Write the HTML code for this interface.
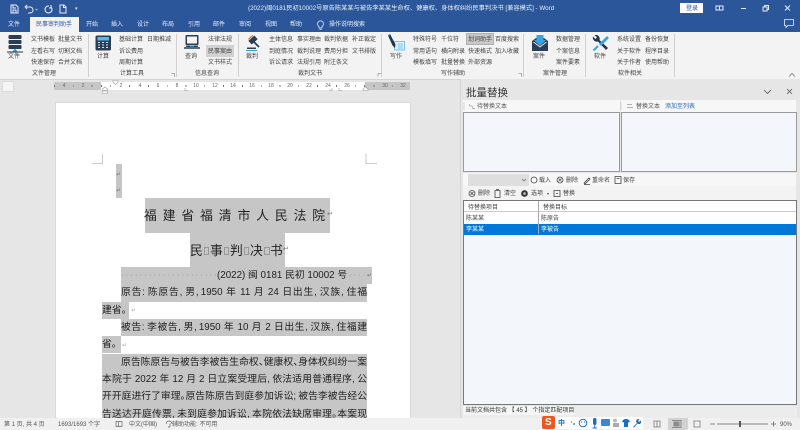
<!DOCTYPE html>
<html lang="zh"><head><meta charset="utf-8"><style>
html,body{margin:0;padding:0;width:800px;height:430px;overflow:hidden;background:#e6e6e6}
body{position:relative;font-family:"Liberation Sans","Noto Sans CJK SC",sans-serif;color:#444;filter:blur(.3px)}
div,span,svg{position:absolute}
.t{white-space:nowrap;font-size:6px;line-height:10px;height:10px;margin-top:.5px}
.c{transform:translateX(-50%)}
.w{color:#e8eef8;font-size:6px}
.g{color:#555}
.sep{width:1px;background:#d0d0d0;top:34px;height:43px}
.sel{background:#c6c6c6}
.ln{left:102px;width:265px;height:17.3px;background:#c6c6c6;overflow:hidden}
.tx{top:2.2px;left:0;width:100%;height:16px;font-size:9.8px;line-height:14px;color:#222;text-align:justify;text-align-last:justify;overflow:hidden}
.tx i{font-style:normal;display:inline-block;width:4.9px;overflow:visible}
.ind{left:121px;width:246px}
.tc{font-size:12.8px;line-height:16px;color:#222;white-space:nowrap}
.d{font-size:7px;color:#777;line-height:10px}
.box{background:#f3f6fb;border:1px solid #9a9a9a;box-sizing:border-box}
.bar{background:#f7f7f7}
.r{font-size:5px;color:#666;line-height:8px;white-space:nowrap;transform:translateX(-50%);top:82px}
</style></head><body>
<!-- title bar -->
<div style="left:0;top:0;width:800px;height:32px;background:#2b579a"></div>
<svg style="left:8px;top:3px" width="75" height="12" viewBox="0 0 75 12" fill="none" stroke="#e8eef8" stroke-width="1"><path d="M3 2h5l2 2v6H3zM5 2v3h3M5 10V7h3v3"/><path d="M17 4h5a3 3 0 0 1 0 6h-2M17 4l2-2M17 4l2 2"/><path d="M27.500 6l1 1 1-1" stroke-width=".6"/><path d="M41 3a3.500 3.500 0 1 0 2 1M43 2v3h-2"/><path d="M52 2h4l2 2v6h-6zM55.500 2v2.500h2.500"/></svg>
<div class="t" style="left:75px;top:3px;color:#e8eef8;font-size:5px">▾</div>
<div class="t w" style="left:248px;top:3px;font-size:6.25px">(2022)闽0181民初10002号原告陈某某与被告李某某生命权、健康权、身体权纠纷民事判决书 [兼容模式] - Word</div>
<div style="left:680px;top:3px;width:23px;height:10px;background:#fff"></div>
<div class="t" style="left:686px;top:3px;color:#2b579a;font-size:6px">登录</div>
<svg style="left:712px;top:3px" width="84" height="11" viewBox="0 0 84 11" fill="none" stroke="#e8eef8" stroke-width="1"><path d="M4 3h7v4H4zM7.500 3v4"/><path d="M29 5.500h5"/><path d="M51 4h4v4h-4zM52.500 4V2.500h4v4H55"/><path d="M73 2.500l5 5M78 2.500l-5 5"/></svg>
<!-- tabs -->
<div style="left:30px;top:17px;width:49px;height:15px;background:#f3f3f3"></div>
<div class="t w c" style="left:14px;top:19px">文件</div>
<div class="t c" style="left:54px;top:19px;color:#2b579a;font-size:6px">民事审判助手</div>
<div class="t w c" style="left:92px;top:19px">开始</div><div class="t w c" style="left:117px;top:19px">插入</div><div class="t w c" style="left:143px;top:19px">设计</div><div class="t w c" style="left:168px;top:19px">布局</div><div class="t w c" style="left:194px;top:19px">引用</div><div class="t w c" style="left:219px;top:19px">邮件</div><div class="t w c" style="left:245px;top:19px">审阅</div><div class="t w c" style="left:271px;top:19px">视图</div><div class="t w c" style="left:296px;top:19px">帮助</div>
<svg style="left:316px;top:19px" width="9" height="11" viewBox="0 0 9 11" fill="none" stroke="#e8eef8" stroke-width=".8"><path d="M3 7.500a3 3 0 1 1 3 0V9H3zM3.500 10.300h2"/></svg>
<div class="t w" style="left:329px;top:19px">操作说明搜索</div>
<svg style="left:783px;top:18px" width="12" height="11" viewBox="0 0 12 11" fill="none" stroke="#e8eef8" stroke-width=".8"><path d="M1.500 1.500h9v6H5L3 9.500v-2H1.500z"/></svg>
<!-- ribbon -->
<div style="left:0;top:32px;width:800px;height:47px;background:#f3f3f3;border-bottom:1px solid #d4d4d4"></div>
<div class="sep" style="left:88px"></div><div class="sep" style="left:176px"></div><div class="sep" style="left:238px"></div><div class="sep" style="left:381px"></div><div class="sep" style="left:523px"></div><div class="sep" style="left:585px"></div><div class="sep" style="left:674px"></div>
<div style="left:206px;top:45px;width:28px;height:12px;background:#d2d2d2"></div>
<div style="left:466px;top:33px;width:28px;height:12px;background:#c9c9c9;border:1px solid #b0b0b0;box-sizing:border-box"></div>
<!-- ribbon icons -->
<svg style="left:6px;top:34px" width="18" height="20" viewBox="0 0 18 20"><rect x="2.500" y="1" width="13" height="4" rx="1" fill="#2a3f55"/><rect x="2.500" y="6" width="13" height="4" rx="1" fill="#2a3f55"/><rect x="2.500" y="11" width="13" height="4" rx="1" fill="#2a3f55"/><path d="M1 18h16" stroke="#333" stroke-width="1"/><path d="M9 14.500l2.500 3h-5z" fill="#2e9fe0"/></svg>
<svg style="left:95px;top:35px" width="17" height="16" viewBox="0 0 17 16"><rect x=".5" y=".5" width="15.500" height="15" rx="1.500" fill="#2a3f55"/><rect x="2.500" y="2" width="11.500" height="3.500" fill="#58b6e8"/><path d="M3 7.500h2M7 7.500h2M11 7.500h2M3 10h2M7 10h2M11 10h2M3 12.500h2M7 12.500h2M11 12.500h2" stroke="#cfe4f2" stroke-width="1"/></svg>
<svg style="left:184px;top:35px" width="16" height="16" viewBox="0 0 16 16"><rect x="1.500" y="0" width="13" height="10" rx="1" fill="#2a3f55"/><rect x="3" y="1.500" width="10" height="7" fill="#f3f3f3"/><path d="M0 13h16" stroke="#2a3f55" stroke-width="1.500"/><path d="M2 10.500h12v1.500H2z" fill="#2a3f55"/><path d="M6 11h4" stroke="#2e9fe0" stroke-width="1"/></svg>
<svg style="left:245px;top:34px" width="17" height="18" viewBox="0 0 17 18"><path d="M8 7l6 6" stroke="#2a3f55" stroke-width="1.800"/><g transform="rotate(-42 8 6)"><rect x="4" y="3.500" width="8" height="5" fill="#2a3f55"/><rect x="5" y="1.800" width="6" height="1.200" fill="#e0752b"/></g><path d="M2 13.500h9V15H2z" fill="#2a3f55"/><path d="M1 16.500h11" stroke="#2e9fe0" stroke-width="1"/></svg>
<svg style="left:387px;top:33px" width="18" height="18" viewBox="0 0 18 18"><rect x="7.500" y="8.500" width="10" height="8.500" fill="#e3f2fb" stroke="#58b6e8" stroke-width=".8"/><path d="M10.500 11h5.500M10.500 13h5.500M10.500 15h5.500" stroke="#58b6e8" stroke-width=".7"/><path d="M1 2.500l2-1.500 5.500 10.500-.5 3.500-2.500-2.500z" fill="#22364d"/><path d="M1.500 2.500l2-1.500" stroke="#2e9fe0"/></svg>
<svg style="left:531px;top:35px" width="18" height="16" viewBox="0 0 18 16"><path d="M1 6l4-3h8l4 3v10H1z" fill="#2a3f55"/><path d="M2.500 7l6.500 5 6.500-5" stroke="#f3f3f3" fill="none" stroke-width=".8"/><path d="M5.500 0h7v5h2.500L9 11 3 5h2.500z" fill="#3aa2e3"/></svg>
<svg style="left:592px;top:35px" width="18" height="17" viewBox="0 0 18 17"><path d="M1 1.500a4 4 0 0 0 5 5l8 8.500 2-2-8.500-8a4 4 0 0 0-5-5l2.500 2.500-1.500 1.500z" fill="#22364d"/><path d="M15 1l2 2-8 8-2-2z" fill="#3aa2e3"/><path d="M6 11l-4.500 4.500" stroke="#3aa2e3" stroke-width="2"/></svg>
<!-- ribbon labels -->
<div class="t c" style="left:14px;top:51px">文件</div><div class="t c" style="left:103px;top:51px">计算</div><div class="t c" style="left:191px;top:51px">查询</div><div class="t c" style="left:252px;top:51px">裁判</div><div class="t c" style="left:396px;top:51px">写作</div><div class="t c" style="left:539px;top:51px">案件</div><div class="t c" style="left:600px;top:51px">软件</div>
<div class="t" style="left:31px;top:34px">文书模板</div><div class="t" style="left:58px;top:34px">批量文书</div>
<div class="t" style="left:31px;top:46px">左看右写</div><div class="t" style="left:58px;top:46px">切割文档</div>
<div class="t" style="left:31px;top:57px">快速保存</div><div class="t" style="left:58px;top:57px">合并文档</div>
<div class="t" style="left:119px;top:34px">基础计算</div><div class="t" style="left:147px;top:34px">日期推减</div>
<div class="t" style="left:119px;top:46px">诉讼费用</div><div class="t" style="left:119px;top:57px">周期计算</div>
<div class="t" style="left:208px;top:34px">法律法规</div><div class="t" style="left:208px;top:46px">民事案由</div><div class="t" style="left:208px;top:57px">文书样式</div>
<div class="t" style="left:269px;top:34px">主体信息</div><div class="t" style="left:297px;top:34px">事实理由</div><div class="t" style="left:324px;top:34px">裁判依据</div><div class="t" style="left:352px;top:34px">补正裁定</div>
<div class="t" style="left:269px;top:46px">到庭情况</div><div class="t" style="left:297px;top:46px">裁判说理</div><div class="t" style="left:324px;top:46px">费用分担</div><div class="t" style="left:352px;top:46px">文书排版</div>
<div class="t" style="left:269px;top:57px">诉讼请求</div><div class="t" style="left:297px;top:57px">法规引用</div><div class="t" style="left:324px;top:57px">附注条文</div>
<div class="t" style="left:413px;top:34px">特殊符号</div><div class="t" style="left:441px;top:34px">千位符</div><div class="t" style="left:468px;top:34px">划词助手</div><div class="t" style="left:495px;top:34px">百度搜索</div>
<div class="t" style="left:413px;top:46px">常用语句</div><div class="t" style="left:441px;top:46px">横向附录</div><div class="t" style="left:468px;top:46px">快速格式</div><div class="t" style="left:495px;top:46px">加入收藏</div>
<div class="t" style="left:413px;top:57px">模板填写</div><div class="t" style="left:441px;top:57px">批量替换</div><div class="t" style="left:468px;top:57px">外部资源</div>
<div class="t" style="left:556px;top:34px">数据管理</div><div class="t" style="left:556px;top:46px">个案信息</div><div class="t" style="left:556px;top:57px">案件要素</div>
<div class="t" style="left:617px;top:34px">系统设置</div><div class="t" style="left:645px;top:34px">备份恢复</div>
<div class="t" style="left:617px;top:46px">关于软件</div><div class="t" style="left:645px;top:46px">程序目录</div>
<div class="t" style="left:617px;top:57px">关于作者</div><div class="t" style="left:645px;top:57px">使用帮助</div>
<div class="t c" style="left:44px;top:68px">文件管理</div><div class="t c" style="left:132px;top:68px">计算工具</div><div class="t c" style="left:207px;top:68px">信息查询</div><div class="t c" style="left:310px;top:68px">裁判文书</div><div class="t c" style="left:453px;top:68px">写作辅助</div><div class="t c" style="left:555px;top:68px">案件管理</div><div class="t c" style="left:630px;top:68px">软件相关</div>
<svg style="left:0;top:70px" width="800" height="10" fill="none" stroke="#777" stroke-width=".6"><path d="M171 3.500h3.500V7M378 3.500h3M378 3.500v3M518.500 3.500h3v3"/><path d="M789 6.500l3-3 3 3" stroke-width=".8"/></svg>
<!-- ruler -->
<div style="left:2px;top:81px;width:12px;height:11px;background:#f5f5f5;border:1px solid #dcdcdc;box-sizing:border-box"></div>
<div style="left:54px;top:82px;width:356px;height:8px;background:#c6c6c6"></div>
<div style="left:101px;top:82px;width:264px;height:8px;background:#fff"></div>
<div style="left:54px;top:85px;width:356px;height:2px;background:repeating-linear-gradient(90deg,#777 0,#777 .8px,transparent .8px,transparent 9.4px)"></div>
<span class="r" style="left:64px;background:#c6c6c6">4</span><span class="r" style="left:83px;background:#c6c6c6">2</span><span class="r" style="left:121px;background:#fff">2</span><span class="r" style="left:140px;background:#fff">4</span><span class="r" style="left:158px;background:#fff">6</span><span class="r" style="left:177px;background:#fff">8</span><span class="r" style="left:196px;background:#fff">10</span><span class="r" style="left:215px;background:#fff">12</span><span class="r" style="left:233px;background:#fff">14</span><span class="r" style="left:252px;background:#fff">16</span><span class="r" style="left:271px;background:#fff">18</span><span class="r" style="left:290px;background:#fff">20</span><span class="r" style="left:309px;background:#fff">22</span><span class="r" style="left:328px;background:#fff">24</span><span class="r" style="left:347px;background:#fff">26</span><span class="r" style="left:385px;background:#c6c6c6">30</span><span class="r" style="left:403px;background:#c6c6c6">32</span>
<svg style="left:96px;top:79px" width="280" height="16" fill="#fff" stroke="#999" stroke-width=".6"><path d="M17 1.500h5v2l-2.500 2-2.500-2zM6.500 10l2.500-2 2.500 2v1.500h-5zM6.500 12h5v2.500h-5zM267 10l2.500-2 2.500 2v1.500h-5z"/><path d="M89 9v2.500h3M233 11.500h3V9M243 9v2.500h3" fill="none"/></svg>
<!-- page -->
<div style="left:56px;top:103px;width:354px;height:316px;background:#fff;box-shadow:0 0 0 1px #dadada"></div>
<svg style="left:90px;top:152px" width="290" height="14" fill="none" stroke="#bdbdbd" stroke-width=".8"><path d="M2 11.500h10.500V2M276 2v9.500h11"/></svg>
<div class="sel" style="left:116px;top:164px;width:6px;height:34px"></div>
<div class="d" style="left:116px;top:170px;font-size:6px">↵</div><div class="d" style="left:116px;top:186px;font-size:6px">↵</div>
<!-- title -->
<div class="sel" style="left:144.500px;top:198px;width:185.500px;height:35px"></div>
<div class="sel" style="left:190px;top:232px;width:95px;height:35px"></div>
<div class="tc" style="left:144px;top:208px;word-spacing:0;letter-spacing:5.900px">福建省福清市人民法院</div>
<div class="d" style="left:157.500px;top:211px;letter-spacing:15.800px;font-size:6px;color:#888">·········</div>
<div class="d" style="left:327px;top:210px">↵</div>
<div class="tc" style="left:190px;top:243px;letter-spacing:7.200px">民事判决书</div>
<div style="left:204px;top:247px;width:5px;height:8px;border:1px solid #999;box-sizing:border-box"></div><div style="left:224px;top:247px;width:5px;height:8px;border:1px solid #999;box-sizing:border-box"></div><div style="left:244px;top:247px;width:5px;height:8px;border:1px solid #999;box-sizing:border-box"></div><div style="left:264px;top:247px;width:6px;height:8px;border:1px solid #999;box-sizing:border-box"></div>
<div class="d" style="left:283px;top:245px">↵</div>
<!-- body -->
<div class="ln" style="left:121px;width:251px;top:267px"></div>
<div class="tc" style="left:121px;top:270px;font-size:7px;line-height:12px;letter-spacing:2.340px;color:#888">·····················</div>
<div class="tc" style="left:217px;top:269px;font-size:9.800px;line-height:14px">(2022) 闽 0181 民初 10002 号</div>
<div class="tc" style="left:349px;top:270px;font-size:7px;line-height:12px;letter-spacing:2.340px;color:#888">····</div><div class="d" style="left:367px;top:271px;font-size:6px">↵</div>
<div class="ln ind" style="top:284.300px"><div class="tx">原告<i>:</i>陈原告<i>,</i>男<i>,</i>1950 年 11 月 24 日出生<i>,</i>汉族<i>,</i>住福</div></div>
<div class="ln" style="top:301.600px;width:27px"><div class="tc" style="left:0;top:2.200px;font-size:9.800px;line-height:14px">建省<span style="position:static">。</span></div></div><div class="d" style="left:131px;top:306px;font-size:6px;color:#aaa">↵</div>
<div class="ln ind" style="top:318.900px"><div class="tx">被告<i>:</i>李被告<i>,</i>男<i>,</i>1950 年 10 月 2 日出生<i>,</i>汉族<i>,</i>住福建</div></div>
<div class="ln" style="top:336.200px;width:19px"><div class="tc" style="left:0;top:2.200px;font-size:9.800px;line-height:14px">省<span style="position:static">。</span></div></div><div class="d" style="left:122px;top:341px;font-size:6px;color:#aaa">↵</div>
<div class="ln" style="top:353.500px;height:65px"></div>
<div class="ln ind" style="top:353.500px"><div class="tx">原告陈原告与被告李被告生命权<i>、</i>健康权<i>、</i>身体权纠纷一案<i>,</i></div></div>
<div class="ln" style="top:370.800px"><div class="tx">本院于 2022 年 12 月 2 日立案受理后<i>,</i>依法适用普通程序<i>,</i>公</div></div>
<div class="ln" style="top:388.100px"><div class="tx">开开庭进行了审理<i>。</i>原告陈原告到庭参加诉讼<i>;</i>被告李被告经公</div></div>
<div class="ln" style="top:405.400px;height:12.600px"><div class="tx">告送达开庭传票<i>,</i>未到庭参加诉讼<i>,</i>本院依法缺席审理<i>。</i>本案现</div></div>
<!-- panel -->
<div style="left:460px;top:79px;width:340px;height:339px;background:#e6e6e6;border-left:1px solid #d4d4d4;box-sizing:border-box"></div>
<div class="t" style="left:466px;top:86px;font-size:10.500px;line-height:13px;height:13px;color:#333">批量替换</div>
<svg style="left:762px;top:87px" width="32" height="10" fill="none" stroke="#555" stroke-width=".8"><path d="M2 3l3.500 3.500L9 3M25 2l5 5M30 2l-5 5"/></svg>
<div class="bar" style="left:463px;top:100px;width:157px;height:12px"></div>
<div class="bar" style="left:621px;top:100px;width:175px;height:12px"></div>
<div class="t g" style="left:477px;top:101px">待替换文本</div>
<div class="t g" style="left:636px;top:101px">替换文本</div>
<div class="t" style="left:665px;top:101px;color:#2b6cb0">添加至列表</div>
<svg style="left:463px;top:101px" width="180" height="10" fill="none" stroke="#999" stroke-width=".7"><path d="M1 1.500v7" stroke-dasharray="1 1"/><path d="M158 1.500v7" stroke-dasharray="1 1"/><path d="M6 3l1 2h2l1 2.500h2"/><path d="M164 3.500h5M164 6.500h6"/></svg>
<div class="box" style="left:463px;top:112px;width:157px;height:59.500px"></div>
<div class="box" style="left:621px;top:112px;width:175.500px;height:59.500px"></div>
<div class="bar" style="left:463px;top:173px;width:333px;height:13px"></div>
<div class="bar" style="left:463px;top:186px;width:333px;height:14px;background:#f3f3f3"></div>
<div style="left:468px;top:174px;width:60.500px;height:12px;background:#dedede"></div>
<svg style="left:521px;top:178px" width="6" height="5" fill="none" stroke="#666" stroke-width=".7"><path d="M1 1l2 2 2-2"/></svg>
<svg style="left:530px;top:174px" width="100" height="13" fill="none" stroke="#444" stroke-width=".8"><circle cx="4" cy="6" r="3"/><circle cx="30" cy="6" r="3"/><path d="M28.500 4.500l3 3M31.500 4.500l-3 3M54 9l5-5 1 1-5 5zM54 10.500h6M85 2.500h6v7h-6zM86.500 4.500h3"/></svg>
<div class="t" style="left:539px;top:175px">载入</div><div class="t" style="left:566px;top:175px">删除</div><div class="t" style="left:592px;top:175px">重命名</div><div class="t" style="left:623px;top:175px">保存</div>
<svg style="left:468px;top:188px" width="110" height="11" fill="none" stroke="#444" stroke-width=".8"><circle cx="4" cy="5.500" r="3"/><path d="M2.500 4l3 3M5.500 4l-3 3M27 2.500h5v7h-5zM28 1.500h3"/><circle cx="56.500" cy="5.500" r="3" fill="#333" stroke-width=".8"/><circle cx="56.500" cy="5.500" r="1.300" fill="#ccc" stroke="none"/><path d="M86 2.500h6v6h-6zM88 5.500h2"/></svg>
<div class="t" style="left:478px;top:188px">删除</div><div class="t" style="left:504px;top:188px">清空</div><div class="t" style="left:531px;top:188px">选项</div><div class="t" style="left:547px;top:188px;font-size:4px">▾</div><div class="t" style="left:563px;top:188px">替换</div>
<!-- table -->
<div class="box" style="left:463px;top:200px;width:333.500px;height:205px;border-color:#777"></div>
<div style="left:464px;top:201px;width:332px;height:11px;background:#fff;border-bottom:1px solid #ccc;box-sizing:border-box"></div>
<div style="left:464px;top:212px;width:332px;height:12px;background:#fff"></div>
<div style="left:464px;top:224px;width:332px;height:10.500px;background:#0078d7"></div>
<div style="left:538px;top:201px;width:1px;height:33px;background:#aaa"></div>
<div class="t" style="left:468px;top:202px">待替换项目</div><div class="t" style="left:543px;top:202px">替换目标</div>
<div class="t" style="left:466px;top:213px">陈某某</div><div class="t" style="left:541px;top:213px">陈原告</div>
<div class="t" style="left:466px;top:224px;color:#fff">李某某</div><div class="t" style="left:541px;top:224px;color:#fff">李被告</div>
<div style="left:463px;top:406px;width:334px;height:12px;background:#ececec"></div>
<div style="left:463px;top:406px;width:111px;height:8.500px;background:#f5f5f5"></div>
<div class="t" style="left:465px;top:405px;color:#333">当前文档共包含 【 45 】 个指定匹配项目</div>
<!-- status -->
<div style="left:0;top:418px;width:800px;height:12px;background:#f0f0f0"></div>
<div class="t g" style="left:4px;top:419px">第 1 页, 共 4 页</div>
<div class="t g" style="left:58px;top:419px">1693/1693 个字</div>
<div class="t g" style="left:129px;top:419px">中文(中国)</div>
<svg style="left:165px;top:420px" width="8" height="8" fill="none" stroke="#666" stroke-width=".7"><path d="M1 4a3 3 0 0 1 6 0M5 3.500v3.500h-2"/></svg>
<div class="t g" style="left:172px;top:419px">辅助功能: 不可用</div>
<svg style="left:115px;top:420px" width="8" height="8" fill="none" stroke="#666" stroke-width=".7"><path d="M1 1.500h2.500v5H1zM3.500 1.500H7v5H3.500z"/></svg>
<!-- ime -->
<div style="left:555px;top:417px;width:88px;height:12px;background:#fff"></div>
<div style="left:542px;top:416px;width:13px;height:13px;background:#f0571e;border-radius:2px"></div>
<div class="t" style="left:545px;top:417px;color:#fff;font-size:10px;font-weight:bold">S</div>
<div class="t" style="left:558px;top:418px;color:#1a6fc4;font-size:7px;font-weight:bold">中</div>
<svg style="left:569px;top:417px" width="72" height="12"><path d="M2 5h1M5 6v2" stroke="#1a6fc4" stroke-width="1.200"/><circle cx="14" cy="6" r="3.800" fill="none" stroke="#1a6fc4"/><circle cx="12.500" cy="5" r=".6" fill="#1a6fc4"/><circle cx="15.500" cy="5" r=".6" fill="#1a6fc4"/><rect x="24" y="1" width="3.500" height="7" rx="1.700" fill="#1a6fc4"/><path d="M25.700 8v3M23.500 11h4.500" stroke="#1a6fc4"/><rect x="32" y="2" width="9" height="7" rx="1" fill="#3f87cc"/><circle cx="46" cy="3.500" r="2" fill="#bbb"/><rect x="44" y="6" width="6" height="4" fill="#aaa"/><path d="M54 3l2-1h2l2 1 1 2-2 .5V10h-4V5.500l-2-.5z" fill="#1a6fc4"/><path d="M64 10l4-4a2 2 0 0 1 2.500-3.500l-1.500 1.500 1 1 1.500-1.500a2 2 0 0 1-3 3l-3.500 4z" fill="#1a6fc4"/></svg>
<!-- view/zoom -->
<div style="left:668px;top:418px;width:20px;height:12px;background:#d2d2d2"></div>
<svg style="left:650px;top:418px" width="150" height="12" fill="none" stroke="#777" stroke-width=".8"><path d="M4 3h3v6H4zM7 3h3v6H7zM44 3h6v6h-6zM22 2.500h9v7h-9"/><path d="M23.500 3.500h6v5h-6z" fill="#8c8c8c" stroke="none"/></svg>
<svg style="left:708px;top:418px" width="70" height="12" fill="none" stroke="#666" stroke-width=".8"><path d="M2 6h5M9 6h51M63 6h5M65.500 3.500v5"/><rect x="31" y="3" width="2" height="6" fill="#555" stroke="none"/></svg>
<div class="t g" style="left:780px;top:419px">90%</div>
</body></html>
